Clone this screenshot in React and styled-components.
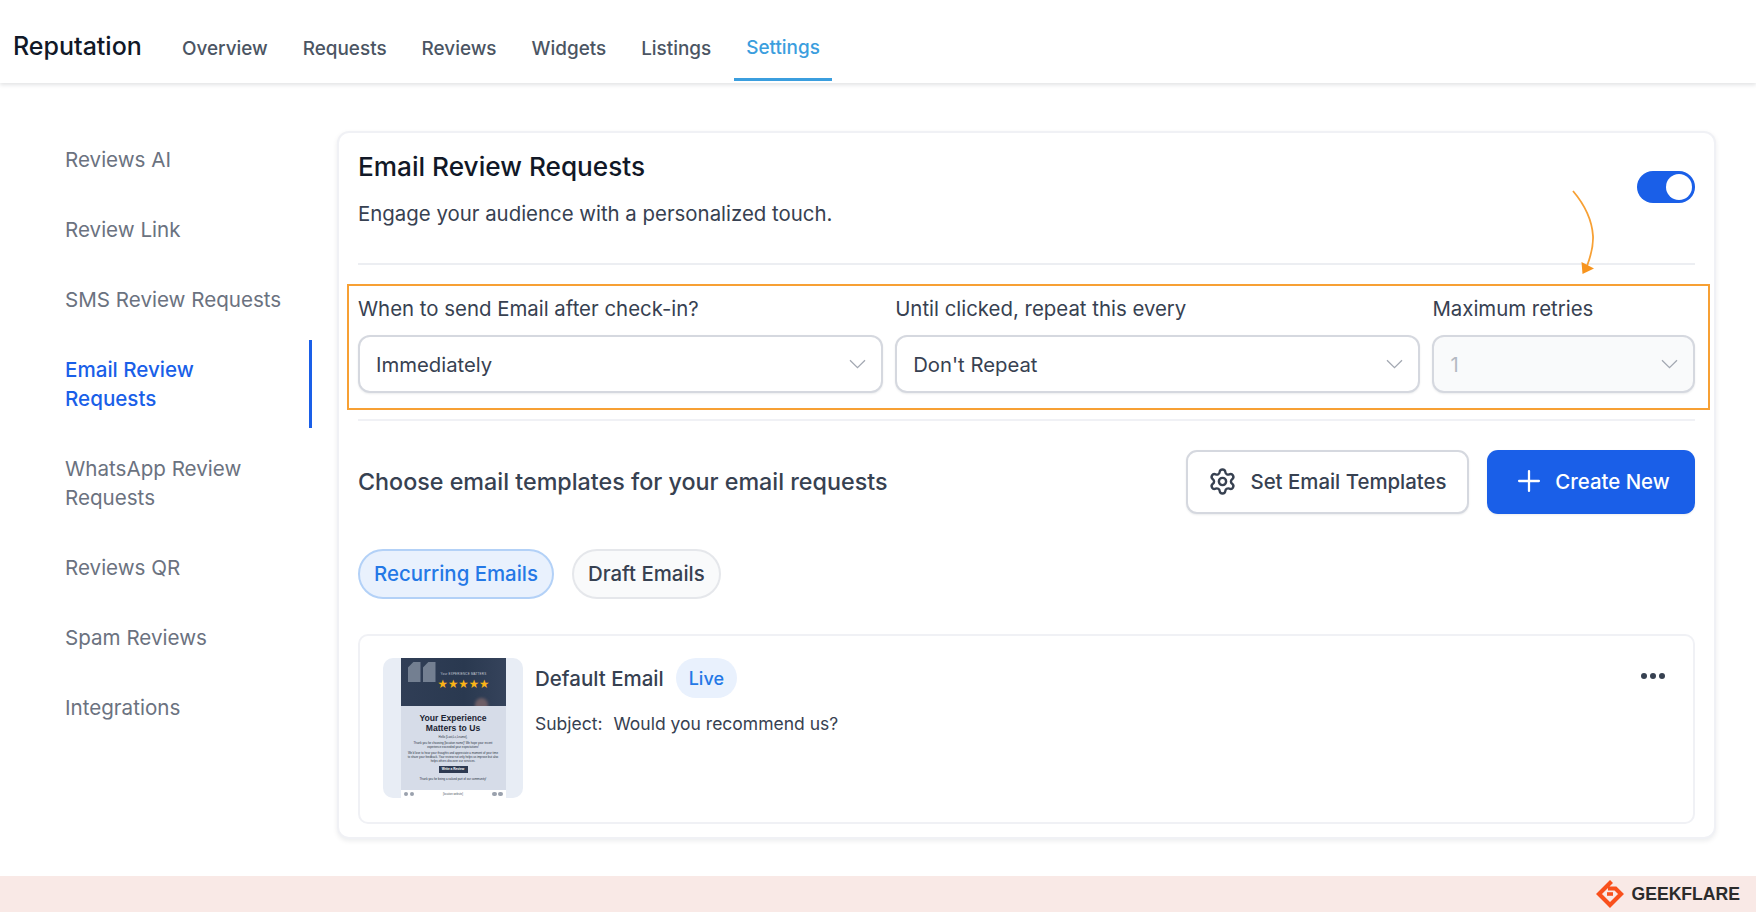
import styled, { createGlobalStyle } from "styled-components";
import { Settings, Plus } from "lucide-react";

const GlobalStyle = createGlobalStyle`
  html, body {
    margin: 0;
    padding: 0;
    background: #fff;
  }
  body {
    font-family: Inter, "Noto Sans", sans-serif;
    color: #374151;
    overflow: hidden;
  }
  * {
    box-sizing: border-box;
  }
`;

const Page = styled.div`
  height: 913px;
  display: flex;
  flex-direction: column;
`;

// top bar
const Header = styled.header`
  height: 83px;
  display: flex;
  padding-left: 13px;
  background: #fff;
  box-shadow: 0 2px 4px rgba(17, 24, 39, 0.12);
`;

const Brand = styled.div`
  width: 157px;
  padding-top: 28px;
  font-size: 25px;
  line-height: 37px;
  font-weight: 500;
  color: #111827;
`;

const Tabs = styled.nav`
  display: flex;
  gap: 11px;
  height: 81px;
`;

const Tab = styled.a`
  padding: ${({ $active }) => ($active ? "34px 12px 0" : "35px 12px 0")};
  font-size: 18.9px;
  line-height: 27px;
  font-weight: 500;
  color: ${({ $active }) => ($active ? "#3b9ede" : "#4b5563")};
  border-bottom: 3px solid ${({ $active }) => ($active ? "#3b9ede" : "transparent")};
`;

const Body = styled.div`
  display: flex;
  padding-top: 48px;
  height: 755px;
`;

// left menu
const Sidebar = styled.aside`
  width: 337px;
  flex-shrink: 0;
  margin-top: -1px;
  padding-right: 25px;
  display: flex;
  flex-direction: column;
  gap: 11px;
`;

const SideItem = styled.a`
  padding: 15px 27px 15px 65px;
  font-size: 20.6px;
  line-height: 29px;
  color: ${({ $active }) => ($active ? "#1a5fe8" : "#6b7280")};
  font-weight: ${({ $active }) => ($active ? 500 : 400)};
  border-right: 3px solid ${({ $active }) => ($active ? "#1a5fe8" : "transparent")};
`;

const Card = styled.main`
  width: 1379px;
  height: 708px;
  padding: 0 19px;
  border: 2px solid #f0f1f5;
  border-radius: 12px;
  box-shadow: 0 2px 5px rgba(17, 24, 39, 0.08);
  background: #fff;
`;

const CardTop = styled.div`
  height: 132px;
  padding-top: 15px;
  display: flex;
  justify-content: space-between;
  border-bottom: 2px solid #eceef2;
`;

const Title = styled.h1`
  margin: 0;
  font-size: 26.2px;
  line-height: 38px;
  font-weight: 500;
  color: #111827;
`;

const Subtitle = styled.p`
  margin: 13px 0 0;
  font-size: 20.4px;
  line-height: 30px;
  color: #374151;
`;

const Toggle = styled.div`
  width: 58px;
  height: 32px;
  margin-top: 23px;
  border-radius: 16px;
  background: #1a5fe8;
  display: flex;
  align-items: center;
  justify-content: flex-end;
  padding-right: 3px;
`;

const Knob = styled.span`
  width: 26px;
  height: 26px;
  border-radius: 50%;
  background: #fff;
`;

const FieldRow = styled.div`
  position: relative;
  height: 156px;
  padding-top: 30px;
  display: grid;
  grid-template-columns: 2fr 2fr 1fr;
  gap: 12px;
  border-bottom: 2px solid #f0f1f5;
`;

const Highlight = styled.div`
  position: absolute;
  left: -11px;
  right: -15px;
  top: 19px;
  height: 126px;
  border: 2px solid #f7a034;
  pointer-events: none;
`;

const Arrow = styled.svg`
  position: absolute;
  right: 99px;
  top: -75px;
  overflow: visible;
`;

const Field = styled.div`
  display: flex;
  flex-direction: column;
`;

const Label = styled.label`
  font-size: 20.4px;
  line-height: 28px;
  height: 40px;
  color: #374151;
`;

const Select = styled.div`
  height: 58px;
  padding: 0 15px 0 16px;
  display: flex;
  align-items: center;
  justify-content: space-between;
  font-size: 20.3px;
  color: ${({ $disabled }) => ($disabled ? "#b4b9c2" : "#374151")};
  background: ${({ $disabled }) => ($disabled ? "#f9fafb" : "#fff")};
  border: 2px solid #d5d8df;
  border-radius: 12px;
  box-shadow: 0 1px 2px rgba(17, 24, 39, 0.08);
`;

const TemplatesRow = styled.div`
  display: flex;
  align-items: center;
  justify-content: space-between;
  margin-top: 29px;
`;

const SectionTitle = styled.h2`
  margin: 0 0 2px;
  font-size: 23.3px;
  font-weight: 500;
  color: #374151;
`;

const Actions = styled.div`
  display: flex;
  gap: 18px;
`;

const Button = styled.button`
  height: 64px;
  width: ${({ $primary }) => ($primary ? "208px" : "283px")};
  padding: 0 0 2px;
  display: flex;
  align-items: center;
  justify-content: center;
  gap: ${({ $primary }) => ($primary ? "9px" : "13px")};
  font-family: inherit;
  font-size: 20.4px;
  font-weight: 500;
  color: ${({ $primary }) => ($primary ? "#fff" : "#374151")};
  background: ${({ $primary }) => ($primary ? "#1a5fe8" : "#fff")};
  border: ${({ $primary }) => ($primary ? "none" : "2px solid #d5d8df")};
  border-radius: 11px;
  box-shadow: 0 1px 2px rgba(17, 24, 39, 0.08);
`;

const Pills = styled.div`
  display: flex;
  gap: 18px;
  margin-top: 35px;
`;

const Pill = styled.button`
  height: 50px;
  padding: 0 14px 2px;
  font-family: inherit;
  font-size: 20.4px;
  font-weight: 500;
  color: ${({ $active }) => ($active ? "#2478e6" : "#374151")};
  background: ${({ $active }) => ($active ? "#e9f1fd" : "#f9fafb")};
  border: 2px solid ${({ $active }) => ($active ? "#b3d1f7" : "#e5e7eb")};
  border-radius: 25px;
`;

const TemplateCard = styled.div`
  display: flex;
  gap: 12px;
  height: 190px;
  margin-top: 35px;
  padding: 22px 24px 22px 23px;
  border: 2px solid #f0f1f5;
  border-radius: 10px;
`;

const Thumb = styled.div`
  width: 140px;
  height: 140px;
  flex-shrink: 0;
  display: flex;
  justify-content: center;
  overflow: hidden;
  border-radius: 10px;
  background: #e8edf5;
`;

// miniature of the email
const Mail = styled.div`
  width: 105px;
  display: flex;
  flex-direction: column;
  text-align: center;
  font-family: "Liberation Sans", sans-serif;
  background: #d6dce8;
`;

const MailHero = styled.div`
  position: relative;
  height: 48px;
  flex-shrink: 0;
  display: flex;
  flex-direction: column;
  align-items: center;
  padding: 14px 0 0 21px;
  overflow: hidden;
  background: linear-gradient(90deg, #303e56 0%, #2a3950 60%, #35435b 100%);

  &::after {
    content: "";
    position: absolute;
    left: 74px;
    bottom: -4px;
    width: 13px;
    height: 12px;
    border-radius: 7px 7px 0 0;
    background: #6e5e66;
    filter: blur(1.5px);
  }
`;

const Quotes = styled.span`
  position: absolute;
  left: 7px;
  top: 4px;
  display: flex;
  gap: 2px;
`;

const Quote = styled.i`
  display: block;
  width: 13px;
  height: 20px;
  background: #737f91;
  clip-path: polygon(45% 0, 100% 0, 100% 100%, 0 100%, 0 30%);
`;

const Tagline = styled.span`
  font-size: 3px;
  line-height: 4px;
  letter-spacing: 0.2px;
  color: #c9ced8;
  white-space: nowrap;
`;

const Stars = styled.span`
  position: relative;
  z-index: 1;
  margin-top: 2px;
  font-size: 11.6px;
  line-height: 12px;
  letter-spacing: 0;
  color: #fbb416;
  white-space: nowrap;
  font-family: "DejaVu Sans", sans-serif;
`;

const MailBody = styled.div`
  flex: 1;
  padding: 7px 7px 0;
  color: #2b3444;
`;

const MailTitle = styled.div`
  font-size: 8.6px;
  line-height: 10px;
  font-weight: 700;
  color: #1c2433;
`;

const MailText = styled.p`
  margin: ${({ $top }) => $top || "2px"} 0 0;
  font-size: 2.9px;
  line-height: 4px;
`;

const MailButton = styled.span`
  display: block;
  margin: 3px auto 0;
  width: 29px;
  height: 7px;
  font-size: 3.2px;
  line-height: 7px;
  font-weight: 700;
  color: #fff;
  background: #2e3a52;
`;

const MailFooter = styled.div`
  height: 8px;
  padding: 0 3px;
  display: flex;
  align-items: center;
  justify-content: space-between;
  font-size: 2.6px;
  color: #4b5563;
  background: #fff;
`;

const Dots = styled.span`
  display: flex;
  gap: 1.5px;
`;

const Dot = styled.i`
  width: 4.5px;
  height: 4.5px;
  border-radius: 50%;
  background: #9aa1ad;
`;

const TemplateInfo = styled.div`
  flex: 1;
`;

const NameRow = styled.div`
  display: flex;
  align-items: center;
  gap: 12px;
  height: 40px;
`;

const Name = styled.span`
  font-size: 20.5px;
  font-weight: 500;
  color: #374151;
`;

const LiveBadge = styled.span`
  height: 40px;
  padding: 0 13px;
  display: flex;
  align-items: center;
  border-radius: 20px;
  font-size: 18px;
  font-weight: 500;
  color: #2478e6;
  background: #e9f1fd;
`;

const SubjectRow = styled.div`
  display: flex;
  gap: 11px;
  margin-top: 12px;
  font-size: 17.5px;
  line-height: 28px;
  color: #374151;
`;

const SubjectLabel = styled.span`
  font-weight: 400;
`;

const MoreButton = styled.div`
  display: flex;
  gap: 3px;
  height: 6px;
  margin: 15px 4px 0 0;
`;

const MoreDot = styled.i`
  width: 6px;
  height: 6px;
  border-radius: 50%;
  background: #374151;
`;

const Footer = styled.footer`
  height: 36px;
  margin-top: 38px;
  padding-right: 16px;
  display: flex;
  align-items: center;
  justify-content: flex-end;
  gap: 6px;
  background: #f9e9e6;
`;

const FooterText = styled.span`
  font-family: "Liberation Sans", sans-serif;
  font-size: 17.6px;
  font-weight: 700;
  color: #2b2b2b;
`;

const Chevron = ({ color = "#a3a8b2" }) => (
  <svg width="17" height="10" viewBox="0 0 17 10" fill="none">
    <path d="M1 1.2 8.5 8.7 16 1.2" stroke={color} strokeWidth="1.3" />
  </svg>
);

const GeekflareMark = () => (
  <svg width="30" height="30" viewBox="0 0 30 30" fill="none">
    <path d="M16.5 2.5 4 15 15 26 26 15 20.5 9.5 H13" stroke="#f9501c" strokeWidth="4.2" />
    <path d="M12 15 H18" stroke="#f9501c" strokeWidth="3.6" />
  </svg>
);

const tabs = ["Overview", "Requests", "Reviews", "Widgets", "Listings"];

const sideItems = [
  "Reviews AI",
  "Review Link",
  "SMS Review Requests",
  "Email Review Requests",
  "WhatsApp Review Requests",
  "Reviews QR",
  "Spam Reviews",
  "Integrations",
];

const fields = [
  { label: "When to send Email after check-in?", value: "Immediately" },
  { label: "Until clicked, repeat this every", value: "Don't Repeat" },
  { label: "Maximum retries", value: "1", disabled: true },
];

function EmailThumb() {
  return (
    <Thumb>
      <Mail>
        <MailHero>
          <Quotes>
            <Quote />
            <Quote />
          </Quotes>
          <Tagline>Your EXPERIENCE MATTERS</Tagline>
          <Stars>★★★★★</Stars>
        </MailHero>
        <MailBody>
          <MailTitle>
            Your Experience
            <br />
            Matters to Us
          </MailTitle>
          <MailText>Hello [Last,Lc,Lname],</MailText>
          <MailText>
            Thank you for choosing [location name]! We hope your recent experience exceeded your expectations!
          </MailText>
          <MailText>
            We'd love to hear your thoughts and appreciate a moment of your time to share your feedback. Your review
            not only helps us improve but also helps others discover our services.
          </MailText>
          <MailButton>Write a Review</MailButton>
          <MailText $top="4px">Thank you for being a valued part of our community!</MailText>
        </MailBody>
        <MailFooter>
          <Dots>
            <Dot />
            <Dot />
          </Dots>
          [location website]
          <Dots>
            <Dot />
            <Dot />
          </Dots>
        </MailFooter>
      </Mail>
    </Thumb>
  );
}

export default function App() {
  return (
    <Page>
      <GlobalStyle />
      <Header>
        <Brand>Reputation</Brand>
        <Tabs>
          {tabs.map((t) => (
            <Tab key={t}>{t}</Tab>
          ))}
          <Tab $active>Settings</Tab>
        </Tabs>
      </Header>

      <Body>
        <Sidebar>
          {sideItems.map((item) => (
            <SideItem key={item} $active={item === "Email Review Requests"}>
              {item}
            </SideItem>
          ))}
        </Sidebar>

        <Card>
          <CardTop>
            <div>
              <Title>Email Review Requests</Title>
              <Subtitle>Engage your audience with a personalized touch.</Subtitle>
            </div>
            <Toggle>
              <Knob />
            </Toggle>
          </CardTop>

          <FieldRow>
            {fields.map((f) => (
              <Field key={f.label}>
                <Label>{f.label}</Label>
                <Select $disabled={f.disabled}>
                  {f.value}
                  <Chevron />
                </Select>
              </Field>
            ))}
            <Highlight />
            <Arrow width="24" height="90" viewBox="0 0 24 90" fill="none">
              <path d="M1 1 C12 14 20 30 21 46 C21.5 58 18 68 15 76" stroke="#f7a034" strokeWidth="1.8" />
              <path d="M9.5 72 L22 78.5 L10.5 84 Z" fill="#f7941e" />
            </Arrow>
          </FieldRow>

          <TemplatesRow>
            <SectionTitle>Choose email templates for your email requests</SectionTitle>
            <Actions>
              <Button>
                <Settings size={29} strokeWidth={2} />
                Set Email Templates
              </Button>
              <Button $primary>
                <Plus size={34} strokeWidth={1.6} />
                Create New
              </Button>
            </Actions>
          </TemplatesRow>

          <Pills>
            <Pill $active>Recurring Emails</Pill>
            <Pill>Draft Emails</Pill>
          </Pills>

          <TemplateCard>
            <EmailThumb />
            <TemplateInfo>
              <NameRow>
                <Name>Default Email</Name>
                <LiveBadge>Live</LiveBadge>
              </NameRow>
              <SubjectRow>
                <SubjectLabel>Subject:</SubjectLabel>
                <span>Would you recommend us?</span>
              </SubjectRow>
            </TemplateInfo>
            <MoreButton>
              <MoreDot />
              <MoreDot />
              <MoreDot />
            </MoreButton>
          </TemplateCard>
        </Card>
      </Body>

      <Footer>
        <GeekflareMark />
        <FooterText>GEEKFLARE</FooterText>
      </Footer>
    </Page>
  );
}
